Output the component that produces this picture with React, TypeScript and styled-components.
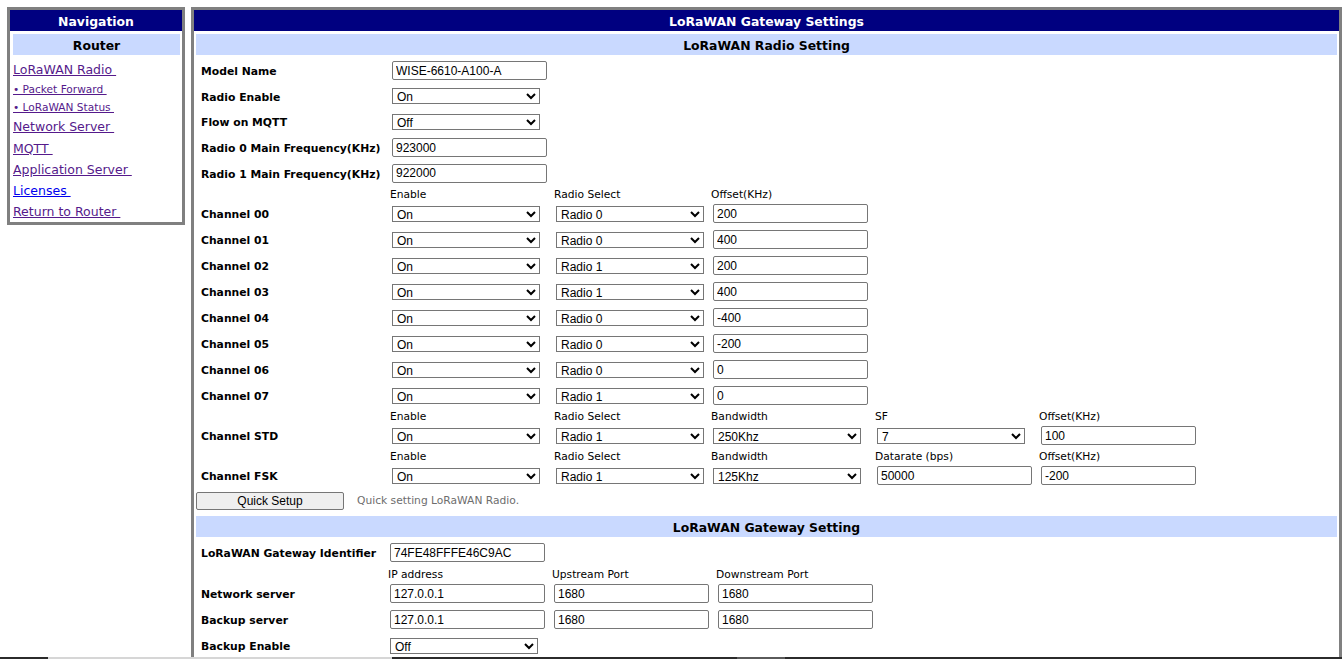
import React from "react";
import styled, { createGlobalStyle } from "styled-components";

const GlobalStyle = createGlobalStyle`
  html, body { overflow: hidden; }
  body {
    margin: 7px 2px 0 7px;
    background: #ffffff;
    color: #000000;
    font-family: "DejaVu Sans", Verdana, sans-serif;
  }
`;

const NAVY = "#000080";
const LIGHT = "#c9d9ff";
const FRAME = "#808080";

const Page = styled.div`
  display: flex;
  align-items: flex-start;
  gap: 6px;
`;

/* ---------- navigation ---------- */
const NavBox = styled.nav`
  flex: none;
  width: 178px;
  height: 218px;
  box-sizing: border-box;
  border: 3px solid ${FRAME};
  overflow: hidden;
`;

const TitleBar = styled.div`
  height: 21px;
  line-height: 23px;
  background: ${NAVY};
  color: #ffffff;
  font-weight: bold;
  font-size: 12.4px;
  text-align: center;
  overflow: hidden;
`;

const SubBar = styled.div<{ $side?: boolean }>`
  margin: ${(p) => (p.$side ? "3px 2px 0 3px" : "3px 0 0")};
  height: 21px;
  line-height: 23px;
  background: ${LIGHT};
  font-weight: bold;
  font-size: 12.4px;
  text-align: center;
  overflow: hidden;
`;

const NavList = styled.div`
  display: flex;
  flex-direction: column;
  padding: 4px 0 0 3px;
`;

const NavLink = styled.a<{ $small?: boolean; $fresh?: boolean }>`
  display: block;
  height: ${(p) => (p.$small ? "18px" : "21.3px")};
  line-height: ${(p) => (p.$small ? "18px" : "21.3px")};
  font-size: ${(p) => (p.$small ? "10.6px" : "12.5px")};
  color: ${(p) => (p.$fresh ? "#0000ee" : "#551a8b")};
  text-decoration: underline;
  white-space: nowrap;
`;

/* ---------- main panel ---------- */
const MainBox = styled.main`
  flex: 1;
  min-height: 700px;
  border: 3px solid ${FRAME};
  border-bottom: none;
`;

const Content = styled.div`
  padding: 0 2px;
`;

const Form = styled.div`
  padding-top: 3px;
`;

const Row = styled.div<{ $cols: string; $h: number }>`
  display: grid;
  grid-template-columns: ${(p) => p.$cols};
  height: ${(p) => p.$h}px;
  align-items: center;
`;

const HeadRow = styled(Row)`
  align-items: end;
  font-size: 10.7px;
  line-height: 12px;
  white-space: nowrap;
`;

const Label = styled.div`
  padding: 2px 0 0 5px;
  font-weight: bold;
  font-size: 10.8px;
  white-space: nowrap;
`;

const Cell = styled.div``;

const TextBox = styled.input`
  justify-self: start;
  margin: 0 0 0 2px;
  width: 155px;
  height: 19px;
  box-sizing: border-box;
  padding: 1px 3px;
  border: 1px solid #767676;
  border-radius: 2px;
  font-family: "Liberation Sans", Arial, sans-serif;
  font-size: 12px;
  color: #000;
  background: #fff;
`;

const Drop = styled.select`
  justify-self: start;
  margin: 0 0 0 2px;
  width: 148px;
  height: 16px;
  box-sizing: border-box;
  padding: 0;
  border: 1px solid #767676;
  border-radius: 0;
  font-family: "Liberation Sans", Arial, sans-serif;
  font-size: 12px;
  color: #000;
  background: #fff;
`;

const ActionRow = styled.div`
  display: flex;
  align-items: center;
  gap: 13px;
  height: 24px;
`;

const Button = styled.button`
  width: 148px;
  height: 18px;
  box-sizing: border-box;
  padding: 0;
  border: 1px solid #767676;
  border-radius: 2px;
  background: #efefef;
  font-family: "Liberation Sans", Arial, sans-serif;
  font-size: 12px;
  color: #000;
`;

const Hint = styled.span`
  font-size: 10.7px;
  color: #6d6d6d;
`;

const BottomEdge = styled.div`
  position: fixed;
  left: 0;
  right: 0;
  bottom: 0;
  height: 2px;
  background: linear-gradient(
    to right,
    #2b2b2b 0 48px,
    #d6d6d6 48px 392px,
    #2b2b2b 392px 737px,
    #5a5a5a 737px 785px,
    #2b2b2b 785px 1342px,
    #ffffff 1342px
  );
`;

const RADIO_COLS = "194px 164px 157px 164px 164px 1fr";
const GW_COLS = "192px 164px 164px 1fr";

const onOff = ["On", "Off"];
const radios = ["Radio 0", "Radio 1"];

type Chan = { name: string; radio: string; offset: string };
const channels: Chan[] = [
  { name: "Channel 00", radio: "Radio 0", offset: "200" },
  { name: "Channel 01", radio: "Radio 0", offset: "400" },
  { name: "Channel 02", radio: "Radio 1", offset: "200" },
  { name: "Channel 03", radio: "Radio 1", offset: "400" },
  { name: "Channel 04", radio: "Radio 0", offset: "-400" },
  { name: "Channel 05", radio: "Radio 0", offset: "-200" },
  { name: "Channel 06", radio: "Radio 0", offset: "0" },
  { name: "Channel 07", radio: "Radio 1", offset: "0" },
];

const Select = ({ value, options }: { value: string; options: string[] }) => (
  <Drop defaultValue={value}>
    {options.map((o) => (
      <option key={o} value={o}>
        {o}
      </option>
    ))}
  </Drop>
);

const navItems: { text: string; small?: boolean; fresh?: boolean }[] = [
  { text: "LoRaWAN Radio" },
  { text: "• Packet Forward", small: true },
  { text: "• LoRaWAN Status", small: true },
  { text: "Network Server" },
  { text: "MQTT" },
  { text: "Application Server" },
  { text: "Licenses", fresh: true },
  { text: "Return to Router" },
];

export default function App() {
  return (
    <>
      <GlobalStyle />
      <Page>
        <NavBox>
          <TitleBar>Navigation</TitleBar>
          <SubBar $side>Router</SubBar>
          <NavList>
            {navItems.map((n) => (
              <NavLink key={n.text} href="#" $small={n.small} $fresh={n.fresh}>
                {n.text + "\u00a0"}
              </NavLink>
            ))}
          </NavList>
        </NavBox>

        <MainBox>
          <TitleBar>LoRaWAN Gateway Settings</TitleBar>
          <Content>
            <SubBar>LoRaWAN Radio Setting</SubBar>
            <Form>
              <Row $cols={RADIO_COLS} $h={25.6}>
                <Label>Model Name</Label>
                <TextBox defaultValue="WISE-6610-A100-A" />
              </Row>
              <Row $cols={RADIO_COLS} $h={25.6}>
                <Label>Radio Enable</Label>
                <Select value="On" options={onOff} />
              </Row>
              <Row $cols={RADIO_COLS} $h={25.6}>
                <Label>Flow on MQTT</Label>
                <Select value="Off" options={onOff} />
              </Row>
              <Row $cols={RADIO_COLS} $h={25.6}>
                <Label>Radio 0 Main Frequency(KHz)</Label>
                <TextBox defaultValue="923000" />
              </Row>
              <Row $cols={RADIO_COLS} $h={25.6}>
                <Label>Radio 1 Main Frequency(KHz)</Label>
                <TextBox defaultValue="922000" />
              </Row>
              <HeadRow $cols={RADIO_COLS} $h={15}>
                <Cell />
                <Cell>Enable</Cell>
                <Cell>Radio Select</Cell>
                <Cell>Offset(KHz)</Cell>
              </HeadRow>
              {channels.map((c) => (
                <Row key={c.name} $cols={RADIO_COLS} $h={26}>
                  <Label>{c.name}</Label>
                  <Select value="On" options={onOff} />
                  <Select value={c.radio} options={radios} />
                  <TextBox defaultValue={c.offset} />
                </Row>
              ))}
              <HeadRow $cols={RADIO_COLS} $h={14}>
                <Cell />
                <Cell>Enable</Cell>
                <Cell>Radio Select</Cell>
                <Cell>Bandwidth</Cell>
                <Cell>SF</Cell>
                <Cell>Offset(KHz)</Cell>
              </HeadRow>
              <Row $cols={RADIO_COLS} $h={26}>
                <Label>Channel STD</Label>
                <Select value="On" options={onOff} />
                <Select value="Radio 1" options={radios} />
                <Select value="250Khz" options={["125Khz", "250Khz", "500Khz"]} />
                <Select value="7" options={["7", "8", "9", "10", "11", "12"]} />
                <TextBox defaultValue="100" />
              </Row>
              <HeadRow $cols={RADIO_COLS} $h={14}>
                <Cell />
                <Cell>Enable</Cell>
                <Cell>Radio Select</Cell>
                <Cell>Bandwidth</Cell>
                <Cell>Datarate (bps)</Cell>
                <Cell>Offset(KHz)</Cell>
              </HeadRow>
              <Row $cols={RADIO_COLS} $h={26}>
                <Label>Channel FSK</Label>
                <Select value="On" options={onOff} />
                <Select value="Radio 1" options={radios} />
                <Select value="125Khz" options={["125Khz", "250Khz", "500Khz"]} />
                <TextBox defaultValue="50000" />
                <TextBox defaultValue="-200" />
              </Row>
              <ActionRow>
                <Button type="button">Quick Setup</Button>
                <Hint>Quick setting LoRaWAN Radio.</Hint>
              </ActionRow>
            </Form>

            <SubBar>LoRaWAN Gateway Setting</SubBar>
            <Form>
              <Row $cols={GW_COLS} $h={26}>
                <Label>LoRaWAN Gateway Identifier</Label>
                <TextBox defaultValue="74FE48FFFE46C9AC" />
              </Row>
              <HeadRow $cols={GW_COLS} $h={15}>
                <Cell />
                <Cell>IP address</Cell>
                <Cell>Upstream Port</Cell>
                <Cell>Downstream Port</Cell>
              </HeadRow>
              <Row $cols={GW_COLS} $h={26}>
                <Label>Network server</Label>
                <TextBox defaultValue="127.0.0.1" />
                <TextBox defaultValue="1680" />
                <TextBox defaultValue="1680" />
              </Row>
              <Row $cols={GW_COLS} $h={26}>
                <Label>Backup server</Label>
                <TextBox defaultValue="127.0.0.1" />
                <TextBox defaultValue="1680" />
                <TextBox defaultValue="1680" />
              </Row>
              <Row $cols={GW_COLS} $h={26}>
                <Label>Backup Enable</Label>
                <Select value="Off" options={onOff} />
              </Row>
            </Form>
          </Content>
        </MainBox>
      </Page>
      <BottomEdge />
    </>
  );
}
